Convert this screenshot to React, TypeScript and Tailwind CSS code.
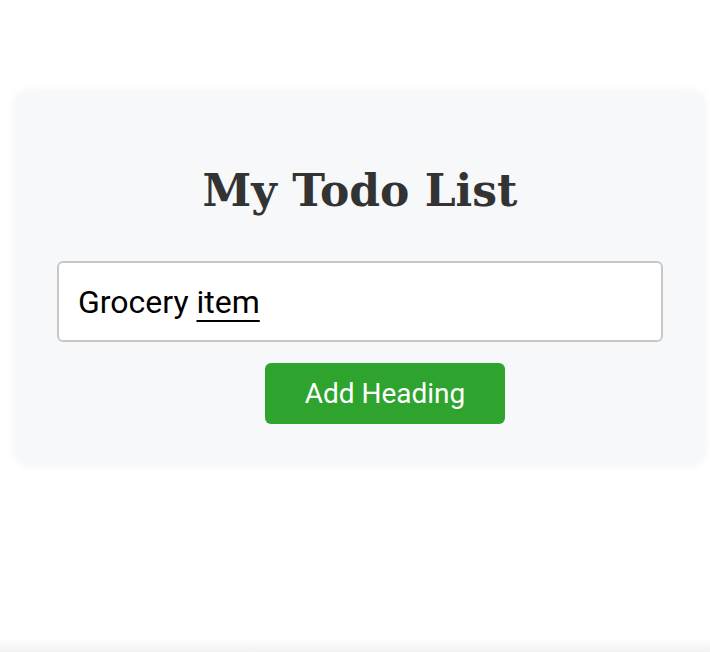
import React from "react";

function App() {
  return (
    <main className="min-h-[652px] bg-white pt-[92px] overflow-hidden">
      {/* Todo card */}
      <section className="ml-4 w-[688px] rounded-xl bg-[#f7f8fa] px-[41px] pt-[71px] pb-10 shadow-[0_0_12px_rgba(0,0,0,0.06)]">
        <h1 className="text-center font-['DejaVu_Serif',serif] text-[44px] font-bold leading-[56px] text-[#333]">
          My Todo List
        </h1>
        <div className="mt-[42px] flex h-[81px] w-full items-center rounded-md border-2 border-[#c8c8c8] bg-white px-[19px] font-['Roboto',sans-serif] text-[32px] text-black">
          Grocery&nbsp;<span className="underline decoration-2 underline-offset-[7px]">item</span>
        </div>
        <button className="mt-[21px] ml-[208px] flex h-[61px] w-[240px] items-center justify-center rounded-md bg-[#2ea42f] font-['Roboto',sans-serif] text-[28px] text-white">
          Add Heading
        </button>
      </section>

      {/* next block peeking in at the bottom */}
      <div className="mt-[174px] h-4 w-full bg-gradient-to-b from-white to-[#f0f0f0]" />
    </main>
  );
}

export default App;
